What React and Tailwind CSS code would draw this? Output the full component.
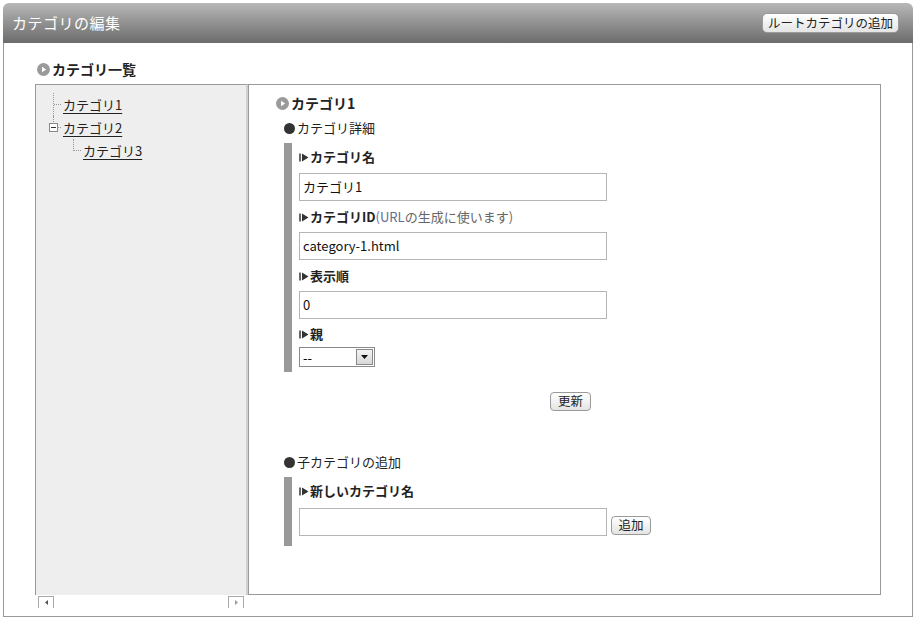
import React from 'react'

const font = { fontFamily: '"Noto Sans CJK JP", "Liberation Sans", sans-serif' }

const CircleIcon = () => (
    <svg width="13" height="13" viewBox="0 0 13 13" className="shrink-0">
        <circle cx="6.5" cy="6.5" r="6.5" fill="#9a9a9a" />
        <path d="M5 3.8 L9.2 6.5 L5 9.2 Z" fill="#fff" />
    </svg>
)

const LabelMark = () => (
    <svg width="10" height="9" viewBox="0 0 10 9" className="shrink-0 mr-[1px]">
        <rect x="0" y="0.5" width="2" height="8" fill="#666" />
        <path d="M3 0.5 L9.5 4.5 L3 8.5 Z" fill="#333" />
    </svg>
)

const Label = ({ children }) => (
    <div className="flex items-center h-[16px] text-[13px] font-bold text-[#222]">
        <LabelMark />
        {children}
    </div>
)

const Field = ({ value }) => (
    <div className="w-[308px] h-[28px] border border-[#b5b5b5] bg-white flex items-center px-[3px] text-[13px] text-[#111]">
        {value}
    </div>
)

const SmallButton = ({ children, className = '' }) => (
    <div className={`h-[19px] px-[4px] flex items-center justify-center rounded-[4px] border border-[#9a9a9a] bg-gradient-to-b from-white to-[#e4e4e4] text-[12.5px] text-[#222] leading-none ${className}`}>
        {children}
    </div>
)

const Bullet = ({ children }) => (
    <div className="flex items-center h-[16px] text-[13px] text-[#222]">
        <span className="inline-block w-[11px] h-[11px] rounded-full bg-[#333] mr-[2px]" />
        {children}
    </div>
)

const TreeItem = ({ children, indent = 0, last = false, toggle = false }) => (
    <div className="flex items-center h-[23px]" style={{ paddingLeft: indent }}>
        <div className="relative w-[14px] h-[23px] shrink-0">
            <span className={`absolute left-[5px] top-0 border-l border-dotted border-[#999] ${last ? 'h-[12px]' : 'h-[23px]'}`} />
            <span className="absolute left-[6px] top-[11px] w-[7px] border-t border-dotted border-[#999]" />
            {toggle && (
                <span className="absolute left-[1px] top-[7px] w-[9px] h-[9px] border border-[#888] bg-white flex items-center justify-center">
                    <span className="w-[5px] h-[1px] bg-[#333]" />
                </span>
            )}
        </div>
        <span className="text-[13px] text-[#222] underline underline-offset-[3px] ml-[1px]">{children}</span>
    </div>
)

const App = () => {
    return (
        <div className="w-[918px] h-[621px] bg-white pt-[3px] pl-[3px]" style={font}>
            {/* header */}
            <div className="w-[910px] h-[40px] rounded-t-[6px] bg-gradient-to-b from-[#b8b8b8] to-[#6c6c6c] flex items-center justify-between pl-[9px] pr-[14px]">
                <span className="text-white text-[15px] tracking-[0.5px]">カテゴリの編集</span>
                <SmallButton className="h-[20px] px-[5px] rounded-[5px]">ルートカテゴリの追加</SmallButton>
            </div>

            {/* body */}
            <div className="w-[910px] h-[574px] border border-t-0 border-[#999] pl-[31px] pt-[18px]">
                <div className="flex items-center h-[16px] gap-[2px] ml-[2px] text-[14px] font-bold text-[#222]">
                    <CircleIcon />
                    カテゴリ一覧
                </div>

                <div className="flex mt-[7px] w-[846px] h-[511px]">
                    {/* left pane */}
                    <div className="flex flex-col w-[213px]">
                        <div className="flex-1 bg-[#eeeeee] border-l border-t border-[#999] border-r-[2px] border-r-[#d0d0d0] pt-[8px] pl-[12px]">
                            <TreeItem>カテゴリ1</TreeItem>
                            <TreeItem toggle last>カテゴリ2</TreeItem>
                            <TreeItem indent={20} last>カテゴリ3</TreeItem>
                        </div>
                    </div>

                    {/* right pane */}
                    <div className="flex-1 border border-[#999] pl-[27px] pt-[10px]">
                        <div className="flex items-center h-[16px] gap-[2px] text-[14px] font-bold text-[#222]">
                            <CircleIcon />
                            カテゴリ1
                        </div>

                        <div className="ml-[8px] mt-[9px]">
                            <Bullet>カテゴリ詳細</Bullet>
                        </div>

                        <div className="ml-[8px] mt-[7px] border-l-[8px] border-[#999] pl-[7px] pt-[6px] pb-[5px]">
                            <Label>カテゴリ名</Label>
                            <div className="mt-[8px]"><Field value="カテゴリ1" /></div>
                            <div className="mt-[8px]">
                                <Label>
                                    カテゴリID
                                    <span className="font-normal text-[#5f6f95]">(URL</span>
                                    <span className="font-normal text-[#666]">の生成に使います)</span>
                                </Label>
                            </div>
                            <div className="mt-[7px]"><Field value="category-1.html" /></div>
                            <div className="mt-[8px]"><Label>表示順</Label></div>
                            <div className="mt-[7px]"><Field value="0" /></div>
                            <div className="mt-[7px]"><Label>親</Label></div>
                            <div className="mt-[5px] w-[76px] h-[20px] border border-[#8a8a8a] bg-white flex items-center justify-between">
                                <span className="text-[13px] pl-[3px] leading-none">--</span>
                                <span className="w-[17px] h-[16px] mr-[1px] border border-[#888] bg-gradient-to-b from-[#f4f4f4] to-[#d8d8d8] flex items-center justify-center">
                                    <svg width="7" height="4" viewBox="0 0 7 4"><path d="M0 0 L7 0 L3.5 4 Z" fill="#111" /></svg>
                                </span>
                            </div>
                        </div>

                        <div className="mt-[20px] ml-[274px] w-[41px]">
                            <SmallButton className="w-[41px]">更新</SmallButton>
                        </div>

                        <div className="ml-[8px] mt-[43px]">
                            <Bullet>子カテゴリの追加</Bullet>
                        </div>

                        <div className="ml-[8px] mt-[7px] h-[69px] border-l-[8px] border-[#999] pl-[7px] pt-[6px]">
                            <Label>新しいカテゴリ名</Label>
                            <div className="mt-[9px] flex items-end gap-[4px]">
                                <Field value="" />
                                <SmallButton className="w-[40px] mb-[1px]">追加</SmallButton>
                            </div>
                        </div>
                    </div>
                </div>

                {/* scrollbar arrows */}
                <div className="flex w-[213px] h-[13px] mt-[1px] pl-[3px] pr-[4px] justify-between">
                    <div className="w-[16px] h-[12px] border border-b-0 border-[#aaa] bg-white flex items-center justify-center">
                        <svg width="3" height="5" viewBox="0 0 3 5"><path d="M3 0 L0 2.5 L3 5 Z" fill="#555" /></svg>
                    </div>
                    <div className="w-[16px] h-[12px] border border-b-0 border-[#aaa] bg-white flex items-center justify-center">
                        <svg width="3" height="5" viewBox="0 0 3 5"><path d="M0 0 L3 2.5 L0 5 Z" fill="#999" /></svg>
                    </div>
                </div>
            </div>
        </div>
    )
}

export default App
